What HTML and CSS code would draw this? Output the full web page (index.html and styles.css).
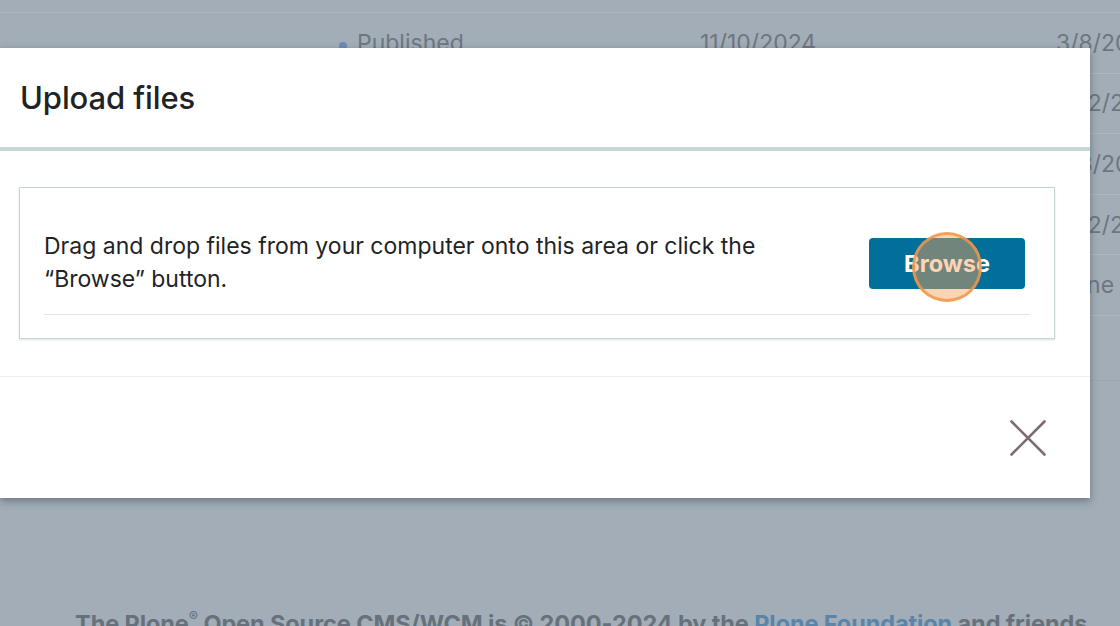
FILE: index.html
```html
<!DOCTYPE html>
<html lang="en">
<head>
<meta charset="utf-8">
<title>Upload files</title>
<link rel="stylesheet" href="styles.css">
</head>
<body>
<div class="page">
  <div class="table">
    <div class="row">
      <div class="cell c1"><span class="dot"></span>Published</div>
      <div class="cell c2">11/10/2024</div>
      <div class="cell c3">3/8/2024</div>
    </div>
    <div class="row">
      <div class="cell c1"></div>
      <div class="cell c2"></div>
      <div class="cell c3">12/2/2024</div>
    </div>
    <div class="row">
      <div class="cell c1"></div>
      <div class="cell c2"></div>
      <div class="cell c3">3/8/2024</div>
    </div>
    <div class="row">
      <div class="cell c1"></div>
      <div class="cell c2"></div>
      <div class="cell c3">12/2/2024</div>
    </div>
    <div class="row">
      <div class="cell c1"></div>
      <div class="cell c2"></div>
      <div class="cell c3">None</div>
    </div>
    <div class="row last"></div>
  </div>
  <footer class="site-footer">
    The Plone<sup>®</sup> Open Source CMS/WCM is © 2000-2024 by the <a href="#">Plone Foundation</a> and friends.
  </footer>
</div>

<div class="modal">
  <div class="modal-header">
    <h1>Upload files</h1>
  </div>
  <div class="modal-content">
    <div class="dropzone">
      <div class="dz-row">
        <p>Drag and drop files from your computer onto this area or click the “Browse” button.</p>
        <button class="browse">Browse</button>
      </div>
      <div class="dz-line"></div>
    </div>
  </div>
  <div class="modal-actions">
    <svg class="close" width="36" height="36" viewBox="0 0 36 36" aria-label="Close">
      <path d="M1.5 1.5 L34.5 34.5 M34.5 1.5 L1.5 34.5" stroke="#7d6b6f" stroke-width="2.6" fill="none" stroke-linecap="round"/>
    </svg>
  </div>
  <span class="click-ring"></span>
</div>
</body>
</html>
```

FILE: styles.css
```css
* { box-sizing: border-box; }
html, body {
  margin: 0;
  padding: 0;
  width: 1120px;
  height: 626px;
  overflow: hidden;
}
body {
  background: #a2adb8;
  font-family: Inter, "Noto Sans", sans-serif;
  color: #6b747d;
  position: relative;
}
.page {
  padding-top: 12px;
}
.table {
  display: flex;
  flex-direction: column;
  overflow: hidden;
}
.row {
  height: 60.6px;
  border-top: 1px solid #adb7c1;
  display: flex;
  align-items: center;
  font-size: 23px;
  color: #6e767f;
}
.row.last {
  height: 66px;
  border-bottom: 1px solid #9ca7b2;
}
.cell { white-space: nowrap; flex-shrink: 0; }
.c1 { width: 700px; padding-left: 339px; display: flex; align-items: center; }
.c2 { width: 356px; }
.c3 { width: 64px; overflow: hidden; }
.dot {
  display: inline-block;
  width: 8px;
  height: 8px;
  border-radius: 50%;
  background: #6a8db2;
  margin-right: 10px;
  margin-top: 6px;
}
.site-footer {
  margin-top: 228px;
  padding-left: 50px;
  text-align: center;
  font-size: 23.5px;
  font-weight: 700;
  color: #67717b;
  white-space: nowrap;
  letter-spacing: -0.1px;
}
.site-footer sup {
  font-size: 14px;
  font-weight: 500;
  vertical-align: 10px;
  line-height: 0;
}
.site-footer a {
  color: #5b84a9;
  text-decoration: none;
}

.modal {
  position: absolute;
  left: 0;
  top: 48px;
  width: 1090px;
  height: 450px;
  background: #fff;
  box-shadow: 0 3px 8px rgba(40, 50, 60, 0.45);
  display: flex;
  flex-direction: column;
}
.modal-header {
  height: 103px;
  border-bottom: 4px solid #c9d6d8;
  display: flex;
  align-items: center;
  padding-left: 20px;
}
.modal-header h1 {
  margin: 0;
  font-size: 31px;
  font-weight: 500;
  color: #1f2326;
  letter-spacing: -0.1px;
}
.modal-content {
  height: 226px;
  padding: 36px 35px 0 19px;
  border-bottom: 1px solid #eceff1;
}
.dropzone {
  height: 152px;
  border: 1px solid #c9d4d7;
  box-shadow: 0 1px 2px rgba(150, 170, 175, 0.35);
  padding: 42px 24px 0 24px;
}
.dz-row {
  display: flex;
  align-items: center;
  justify-content: space-between;
  height: 66px;
}
.dz-row p {
  margin: 0;
  width: 760px;
  font-size: 23px;
  line-height: 33px;
  color: #1f2326;
}
.browse {
  width: 156px;
  height: 51px;
  margin-right: 5px;
  border: none;
  border-radius: 4px;
  background: #00709b;
  color: #fff;
  font-family: Inter, "Noto Sans", sans-serif;
  font-size: 23.5px;
  font-weight: 700;
  padding: 0;
}
.dz-line {
  margin-top: 18px;
  border-top: 1px solid #dfe5e7;
}
.modal-actions {
  flex: 1;
  display: flex;
  align-items: center;
  justify-content: flex-end;
  padding-right: 44px;
}
.click-ring {
  position: absolute;
  left: 912px;
  top: 184px;
  width: 70px;
  height: 70px;
  border-radius: 50%;
  background: rgba(250, 160, 88, 0.45);
  border: 3px solid rgba(240, 150, 70, 0.85);
}
```
